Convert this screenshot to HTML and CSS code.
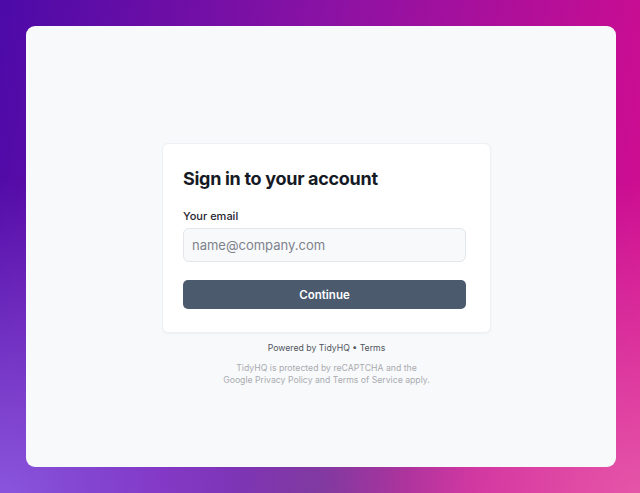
FILE: index.html
```html
<!DOCTYPE html>
<html lang="en">
<head>
    <title>Sign in</title>
    <link rel="stylesheet" href="styles.css">
</head>
<body>
    <div class="window">
        <div class="login">
            <div class="card">
                <h1>Sign in to your account</h1>
                <form class="login-form">
                    <label for="email">Your email</label>
                    <input type="email" id="email" name="email" placeholder="name@company.com">
                    <button type="submit">Continue</button>
                </form>
            </div>
            <p class="powered">Powered by TidyHQ &bull; Terms</p>
            <p class="recaptcha">TidyHQ is protected by reCAPTCHA and the<br>Google Privacy Policy and Terms of Service apply.</p>
        </div>
    </div>
</body>
</html>
```

FILE: styles.css
```css
html, body {
    height: 100%;
}

body {
    margin: 0;
    padding: 26px 24px 26px 26px;
    box-sizing: border-box;
    font-family: Inter, "Liberation Sans", Arial, sans-serif;
    background:
        radial-gradient(ellipse at 100% 100%, #e455a8 0%, rgba(228, 85, 168, 0) 45%),
        radial-gradient(ellipse at 0% 100%, #8a55dc 0%, rgba(138, 85, 220, 0) 45%),
        radial-gradient(ellipse at 50% 100%, #5a2a8e 0%, rgba(90, 42, 142, 0) 35%),
        linear-gradient(100deg, #4c0aa8 0%, #8a12a4 45%, #d80c8e 100%);
}

.window {
    height: 441px;
    background-color: #f8f9fb;
    border-radius: 9px;
    display: flex;
    justify-content: center;
    padding-top: 117px;
    box-sizing: border-box;
}

.login {
    width: 329px;
    margin-left: 11px;
    text-align: center;
}

.card {
    background-color: #fff;
    border: 1px solid #eef0f3;
    border-radius: 6px;
    box-shadow: 0 1px 2px rgba(0, 0, 0, 0.04);
    padding: 24px 24px 23px 20px;
    text-align: left;
}

h1 {
    margin: 0 0 20px;
    font-size: 18px;
    font-weight: 700;
    letter-spacing: -0.3px;
    color: #151a24;
}

.login-form {
    display: flex;
    flex-direction: column;
}

label {
    font-size: 11px;
    font-weight: 500;
    color: #1f2530;
    margin-bottom: 5px;
}

input {
    height: 34px;
    padding: 0 8px;
    border: 1px solid #e3e6ea;
    border-radius: 6px;
    background-color: #f8f9fb;
    font-family: inherit;
    font-size: 13px;
    color: #333;
    box-sizing: border-box;
}

input::placeholder {
    color: #7d838c;
}

button {
    margin-top: 18px;
    height: 29px;
    border: none;
    border-radius: 5px;
    background-color: #4b5a6d;
    color: #fff;
    font-family: inherit;
    font-size: 11.5px;
    font-weight: 600;
    cursor: pointer;
}

.powered {
    margin: 10px 0 0;
    font-size: 8.7px;
    color: #50555d;
}

.recaptcha {
    margin: 9px 0 0;
    font-size: 8.7px;
    line-height: 12px;
    color: #a9abaf;
}
```
